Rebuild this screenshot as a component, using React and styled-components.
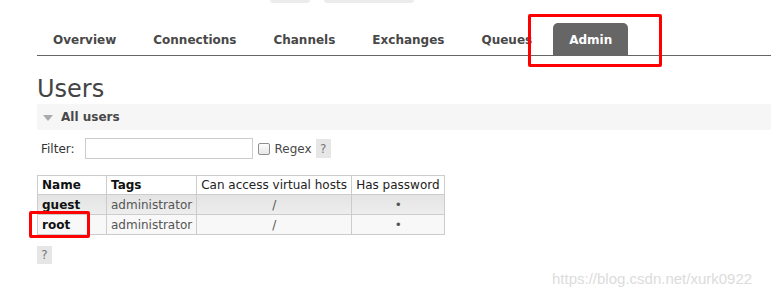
import React from 'react';
import styled, { createGlobalStyle } from 'styled-components';

const GlobalStyle = createGlobalStyle`
  html, body {
    margin: 0;
    padding: 0;
    background: #fff;
  }
  body {
    font-family: "DejaVu Sans", Verdana, sans-serif;
    font-size: 12px;
    color: #484848;
  }
`;

const Page = styled.div`
  position: relative;
  width: 771px;
  height: 299px;
  overflow: hidden;
`;

const TopStubs = styled.div`
  display: flex;
  gap: 14px;
  padding-left: 270px;
  height: 3px;
`;

const Stub = styled.div`
  width: ${({ w }) => w}px;
  height: 3px;
  background: #ececec;
  border-radius: 0 0 4px 4px;
`;

const Nav = styled.ul`
  display: flex;
  list-style: none;
  margin: 20px 0 0 37px;
  padding: 0;
  border-bottom: 1px solid #666;
`;

const Tab = styled.li`
  height: 32px;
  line-height: 34px;
  padding: 0 16px;
  margin-right: 5px;
  font-weight: bold;
  color: ${({ active }) => (active ? '#fff' : '#484848')};
  background: ${({ active }) => (active ? '#666' : 'transparent')};
  border-radius: 5px 5px 0 0;
`;

const Content = styled.div`
  padding-left: 37px;
`;

const Title = styled.h1`
  margin: 19px 0 0;
  font-size: 24px;
  line-height: 29px;
  font-weight: normal;
  color: #444;
`;

const SectionHeader = styled.div`
  display: flex;
  align-items: center;
  height: 26px;
  background: #f6f6f6;
  font-weight: bold;
  color: #484848;
`;

const Arrow = styled.span`
  width: 0;
  height: 0;
  margin: 2px 8px 0 6px;
  border-left: 5.5px solid transparent;
  border-right: 5.5px solid transparent;
  border-top: 6px solid #aaa;
`;

const FilterRow = styled.div`
  display: flex;
  align-items: center;
  margin-top: 8px;
  height: 21px;
  padding-left: 4px;
`;

const Label = styled.span`
  color: #333;
  margin-right: 10px;
`;

const TextInput = styled.input`
  box-sizing: border-box;
  width: 168px;
  height: 21px;
  border: 1px solid #ccc;
  margin: 0;
  padding: 0 3px;
`;

const Check = styled.span`
  box-sizing: border-box;
  width: 12px;
  height: 12px;
  margin: 0 5px 0 5px;
  border: 1px solid #8f8f8f;
  border-radius: 2px;
  background: linear-gradient(#fdfdfd, #e6e6e6);
`;

const CheckLabel = styled.span`
  color: #484848;
  margin-right: 4px;
`;

const Help = styled.span`
  display: inline-flex;
  align-items: center;
  justify-content: center;
  width: 15px;
  height: ${({ h }) => h}px;
  background: #e6e6e6;
  color: #777;
`;

const Table = styled.table`
  margin-top: 16px;
  border-collapse: collapse;
  font-size: 12px;
`;

const Th = styled.th`
  box-sizing: border-box;
  width: ${({ w }) => w}px;
  height: 19px;
  padding: 0 4px;
  border: 1px solid #ccc;
  text-align: left;
  font-weight: ${({ bold }) => (bold ? 'bold' : 'normal')};
  color: ${({ bold }) => (bold ? '#111' : '#222')};
  white-space: nowrap;
  background: #fff;
`;

const Row = styled.tr`
  background: ${({ alt }) =>
    alt ? '#f8f8f8' : 'linear-gradient(#e4e4e4, #eeeeee)'};
`;

const Td = styled.td`
  height: 19px;
  padding: 0 4px;
  border: 1px solid #ccc;
  white-space: nowrap;
  text-align: ${({ center }) => (center ? 'center' : 'left')};
  font-weight: ${({ bold }) => (bold ? 'bold' : 'normal')};
  color: ${({ bold }) => (bold ? '#111' : '#555')};
`;

const HelpBelow = styled.div`
  margin-top: 11px;
`;

const Highlight = styled.div`
  position: absolute;
  box-sizing: border-box;
  border: 3px solid #f00;
  border-radius: 2px;
  left: ${({ x }) => x}px;
  top: ${({ y }) => y}px;
  width: ${({ w }) => w}px;
  height: ${({ h }) => h}px;
`;

const Watermark = styled.div`
  position: absolute;
  left: 552px;
  top: 270px;
  font-family: "Liberation Sans", Arial, sans-serif;
  font-size: 15px;
  color: #dcdcdc;
`;

const tabs = ['Overview', 'Connections', 'Channels', 'Exchanges', 'Queues', 'Admin'];

const columns = [
  { label: 'Name', w: 69, bold: true },
  { label: 'Tags', w: 90, bold: true },
  { label: 'Can access virtual hosts', w: 155 },
  { label: 'Has password', w: 93 },
];

const users = [
  { name: 'guest', tags: 'administrator', vhosts: '/' },
  { name: 'root', tags: 'administrator', vhosts: '/' },
];

export default function App() {
  return (
    <Page>
      <GlobalStyle />
      <TopStubs>
        <Stub w={40} />
        <Stub w={90} />
      </TopStubs>
      <Nav>
        {tabs.map((t) => (
          <Tab key={t} active={t === 'Admin'}>{t}</Tab>
        ))}
      </Nav>
      <Content>
        <Title>Users</Title>
        <SectionHeader>
          <Arrow />
          All users
        </SectionHeader>
        <FilterRow>
          <Label>Filter:</Label>
          <TextInput />
          <Check />
          <CheckLabel>Regex</CheckLabel>
          <Help h={19}>?</Help>
        </FilterRow>
        <Table>
          <thead>
            <tr>
              {columns.map((c) => (
                <Th key={c.label} w={c.w} bold={c.bold}>{c.label}</Th>
              ))}
            </tr>
          </thead>
          <tbody>
            {users.map((u, i) => (
              <Row key={u.name} alt={i % 2 === 1}>
                <Td bold>{u.name}</Td>
                <Td>{u.tags}</Td>
                <Td center>{u.vhosts}</Td>
                <Td center>•</Td>
              </Row>
            ))}
          </tbody>
        </Table>
        <HelpBelow>
          <Help h={18}>?</Help>
        </HelpBelow>
      </Content>
      <Highlight x={528} y={14} w={134} h={53} />
      <Highlight x={29} y={211} w={61} h={27} />
      <Watermark>https://blog.csdn.net/xurk0922</Watermark>
    </Page>
  );
}
